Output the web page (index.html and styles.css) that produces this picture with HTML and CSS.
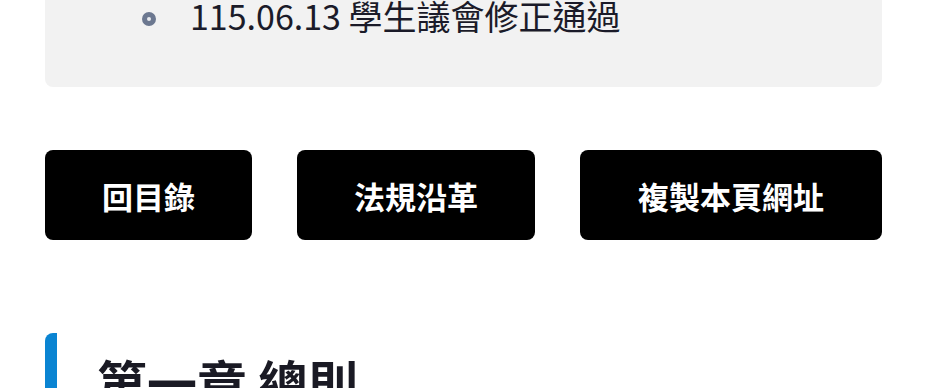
FILE: index.html
```html
<!DOCTYPE html>
<html lang="zh-Hant">
<head>
<meta charset="utf-8">
<title>法規</title>
<link rel="stylesheet" href="styles.css">
</head>
<body>
<main class="page">
  <section class="history">
    <ul class="history-list">
      <li class="history-item"><span class="dot"></span><span class="history-text">115.06.13 學生議會修正通過</span></li>
    </ul>
  </section>
  <nav class="actions">
    <a class="btn" href="#">回目錄</a>
    <a class="btn" href="#">法規沿革</a>
    <a class="btn" href="#">複製本頁網址</a>
  </nav>
  <h2 class="chapter">第一章 總則</h2>
</main>
</body>
</html>
```
FILE: styles.css
```css
html, body {
  margin: 0;
  padding: 0;
  background: #ffffff;
  overflow: hidden;
}
body {
  font-family: "Noto Sans CJK TC", "Noto Sans", sans-serif;
  color: #1b1b29;
}
.page {
  width: 837px;
  margin: 0 0 0 45px;
}
.history {
  background: #f2f2f2;
  border-radius: 8px;
  margin-top: -40px;
  padding: 30px 0 46px 0;
}
.history-list {
  list-style: none;
  margin: 0;
  padding: 0 0 0 97px;
}
.history-item {
  display: flex;
  align-items: center;
  gap: 34px;
  font-size: 34px;
  line-height: 51px;
}
.dot {
  width: 14px;
  height: 14px;
  box-sizing: border-box;
  border-radius: 50%;
  border: 5px solid #6c7890;
  background: #e9ebef;
  flex: none;
  margin-top: 6px;
}
.history-text {
  white-space: nowrap;
}
.actions {
  display: flex;
  gap: 45px;
  margin-top: 63px;
}
.btn {
  display: flex;
  align-items: center;
  justify-content: center;
  height: 90px;
  padding: 0 57px;
  background: #000000;
  color: #ffffff;
  border-radius: 8px;
  font-size: 31px;
  font-weight: 700;
  text-decoration: none;
  white-space: nowrap;
}
.actions .btn:last-child {
  flex: 1;
}
.chapter {
  margin: 93px 0 0 0;
  border-left: 12px solid #0a84d2;
  border-radius: 8px 0 0 0;
  padding: 12px 0 0 40px;
  font-size: 50px;
  line-height: 1.45;
  font-weight: 700;
  color: #1a1a24;
}
```
